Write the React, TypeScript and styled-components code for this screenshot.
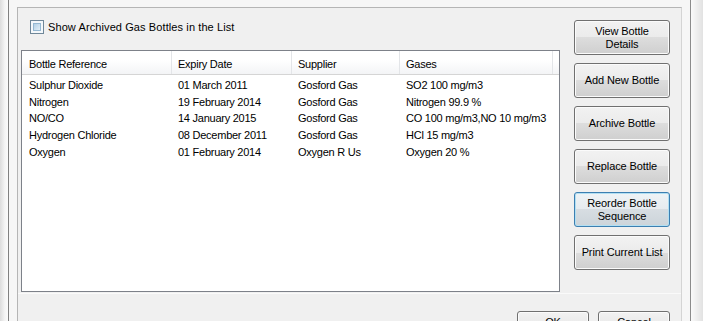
import React from "react";
import styled, { createGlobalStyle, css } from "styled-components";

const GlobalStyle = createGlobalStyle`
    html, body {
        margin: 0;
        padding: 0;
        background: #f0f0f0;
    }
    body {
        font-family: "Liberation Sans", Arial, sans-serif;
        font-size: 11px;
        color: #000;
    }
`;

const Screen = styled.div`
    width: 703px;
    height: 321px;
    display: flex;
    overflow: hidden;
    background: #f0f0f0;
`;

const Glass = styled.div<{ side: "left" | "right" }>`
    flex: none;
    width: ${(p) => (p.side === "left" ? "8px" : "12px")};
    background: ${(p) =>
        p.side === "left"
            ? "linear-gradient(to right, #dcdcdc, #f4f4f4 60%, #fbfbfb)"
            : "linear-gradient(to right, #fafafa, #eeeeee 50%, #e2e2e2)"};
`;

const Frame = styled.div`
    flex: none;
    width: 683px;
    box-sizing: border-box;
    border-left: 1px solid #808080;
    border-right: 1px solid #8c8c8c;
    padding: 7px 8px 0 8px;
    background: #f6f6f6;
    display: flex;
`;

const Page = styled.div`
    flex: 1;
    border: 1px solid #b5b5b5;
    border-right-color: #d4d4d4;
    border-bottom: none;
    background: #f0f0f0;
    display: flex;
    flex-direction: column;
`;

const Content = styled.div`
    display: flex;
    padding: 12px 11px 0 3px;
`;

const LeftColumn = styled.div`
    width: 539px;
    display: flex;
    flex-direction: column;
`;

const CheckRow = styled.label`
    height: 30px;
    display: flex;
    align-items: flex-start;
    gap: 4px;
    padding-left: 9px;
    letter-spacing: 0.1px;
    line-height: 15px;
`;

const CheckBox = styled.span`
    width: 14px;
    height: 14px;
    flex: none;
    box-sizing: border-box;
    border: 1px solid #6f8799;
    padding: 2px;
    background: #f4f8fb;
    display: flex;

    &::after {
        content: "";
        flex: 1;
        background: linear-gradient(135deg, #b3d0e6, #e2eff8);
        border: 1px solid #95b8d2;
    }
`;

const ListBox = styled.div`
    height: 242px;
    box-sizing: border-box;
    border: 1px solid #7d8189;
    background: #fff;
    overflow: hidden;
`;

const columns = "150px 120px 108px 153px";

const HeaderRow = styled.div`
    display: grid;
    grid-template-columns: ${columns};
    height: 24px;
    box-sizing: border-box;
    border-bottom: 1px solid #d5d5d5;
    background: linear-gradient(#ffffff, #ffffff 40%, #f3f4f6);
    margin-bottom: 2px;
`;

const HeaderCell = styled.div`
    display: flex;
    align-items: center;
    padding: 2px 0 0 6px;
    border-right: 1px solid #e3e5e8;
    letter-spacing: -0.25px;

    &:first-child {
        padding-left: 7px;
    }
`;

const Row = styled.div`
    display: grid;
    grid-template-columns: ${columns};
    height: 16.6px;
    align-items: center;
`;

const Cell = styled.div`
    padding-left: 6px;
    white-space: nowrap;
    letter-spacing: -0.25px;

    &:first-child {
        padding-left: 7px;
    }
`;

const ButtonColumn = styled.div`
    width: 96px;
    margin-left: 14px;
    display: flex;
    flex-direction: column;
    gap: 8px;
`;

const WinButton = styled.button<{ focused?: boolean; w?: number }>`
    width: ${(p) => (p.w ? `${p.w}px` : "100%")};
    height: ${(p) => (p.w ? "23px" : "35px")};
    flex: none;
    padding: 0 4px;
    border: 1px solid #707070;
    border-radius: 3px;
    font-family: "Liberation Sans", Arial, sans-serif;
    font-size: 11px;
    letter-spacing: -0.1px;
    line-height: 13px;
    color: #000;
    background: linear-gradient(#f2f2f2 0%, #ebebeb 50%, #dddddd 50%, #cfcfcf 100%);
    box-shadow: inset 0 0 0 1px #fbfbfb;

    ${(p) =>
        p.focused &&
        css`
            border-color: #3c7fb1;
            background: linear-gradient(#eef3f6 0%, #e6ebef 50%, #d7dde2 50%, #ccd4da 100%);
            box-shadow: inset 0 0 0 1px #b2dff2;
        `}
`;

const Footer = styled.div`
    margin-top: 1px;
    border-top: 1px solid #fafafa;
    display: flex;
    justify-content: flex-end;
    gap: 9px;
    padding: 17px 11px 0 0;
`;

interface IBottle {
    reference: string;
    expiry: string;
    supplier: string;
    gases: string;
}

const bottles: IBottle[] = [
    { reference: "Sulphur Dioxide", expiry: "01 March 2011", supplier: "Gosford Gas", gases: "SO2 100 mg/m3" },
    { reference: "Nitrogen", expiry: "19 February 2014", supplier: "Gosford Gas", gases: "Nitrogen 99.9 %" },
    { reference: "NO/CO", expiry: "14 January 2015", supplier: "Gosford Gas", gases: "CO 100 mg/m3,NO 10 mg/m3" },
    { reference: "Hydrogen Chloride", expiry: "08 December 2011", supplier: "Gosford Gas", gases: "HCl 15 mg/m3" },
    { reference: "Oxygen", expiry: "01 February 2014", supplier: "Oxygen R Us", gases: "Oxygen 20 %" },
];

const actions = [
    { label: "View Bottle Details", lines: ["View Bottle", "Details"] },
    { label: "Add New Bottle", lines: ["Add New Bottle"] },
    { label: "Archive Bottle", lines: ["Archive Bottle"] },
    { label: "Replace Bottle", lines: ["Replace Bottle"] },
    { label: "Reorder Bottle Sequence", lines: ["Reorder Bottle", "Sequence"], focused: true },
    { label: "Print Current List", lines: ["Print Current List"] },
];

export default function App() {
    return (
        <>
            <GlobalStyle />
            <Screen>
                <Glass side="left" />
                <Frame>
                    <Page>
                        <Content>
                            <LeftColumn>
                                <CheckRow>
                                    <CheckBox />
                                    Show Archived Gas Bottles in the List
                                </CheckRow>
                                <ListBox>
                                    <HeaderRow>
                                        <HeaderCell>Bottle Reference</HeaderCell>
                                        <HeaderCell>Expiry Date</HeaderCell>
                                        <HeaderCell>Supplier</HeaderCell>
                                        <HeaderCell>Gases</HeaderCell>
                                    </HeaderRow>
                                    {bottles.map((b) => (
                                        <Row key={b.reference}>
                                            <Cell>{b.reference}</Cell>
                                            <Cell>{b.expiry}</Cell>
                                            <Cell>{b.supplier}</Cell>
                                            <Cell>{b.gases}</Cell>
                                        </Row>
                                    ))}
                                </ListBox>
                            </LeftColumn>
                            <ButtonColumn>
                                {actions.map((a) => (
                                    <WinButton key={a.label} focused={a.focused}>
                                        {a.lines.map((l, i) => (
                                            <React.Fragment key={l}>
                                                {i > 0 && <br />}
                                                {l}
                                            </React.Fragment>
                                        ))}
                                    </WinButton>
                                ))}
                            </ButtonColumn>
                        </Content>
                        <Footer>
                            <WinButton w={72}>OK</WinButton>
                            <WinButton w={72}>Cancel</WinButton>
                        </Footer>
                    </Page>
                </Frame>
                <Glass side="right" />
            </Screen>
        </>
    );
}
